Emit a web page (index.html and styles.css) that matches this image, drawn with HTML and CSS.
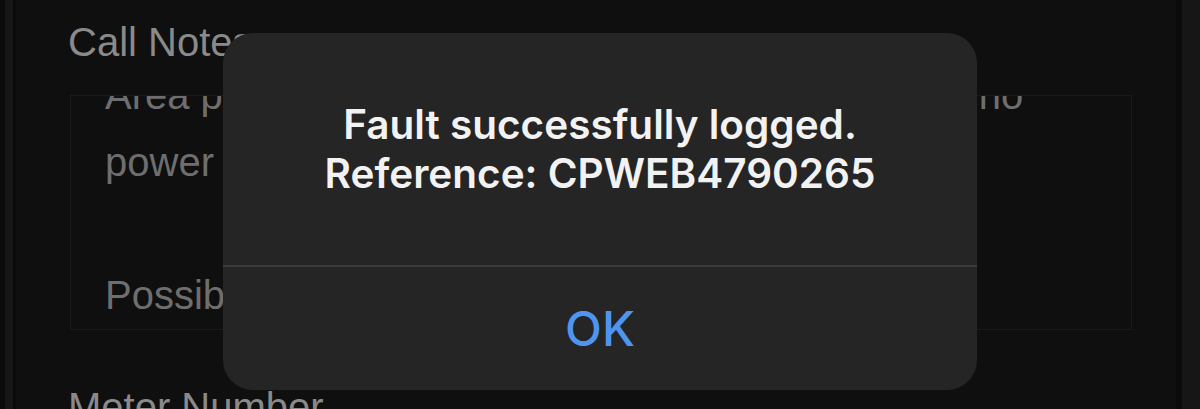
FILE: index.html
```html
<!DOCTYPE html>
<html lang="en">
<head>
<meta charset="utf-8">
<title>Fault logged</title>
<link rel="stylesheet" href="styles.css">
</head>
<body>
<div class="frame">
  <div class="edge-left"></div>
  <main class="form">
    <div class="label">Call Notes</div>
    <div class="notes">
      <div class="notes-text">
        <div class="line">Area power outage in the street, customers have no</div>
        <div class="line">power since this morning.</div>
        <div class="line">&nbsp;</div>
        <div class="line">Possible cable fault.</div>
      </div>
    </div>
    <div class="label label-next">Meter Number</div>
  </main>
  <div class="edge-right"></div>
</div>

<div class="alert" role="alertdialog">
  <div class="alert-body">
    <p class="alert-msg">Fault successfully logged.<br>Reference: CPWEB4790265</p>
  </div>
  <div class="alert-sep"></div>
  <button class="alert-btn" type="button">OK</button>
</div>
</body>
</html>
```
FILE: styles.css
```css
html, body {
  margin: 0;
  padding: 0;
  background: #0f0f0f;
  height: 409px;
  overflow: hidden;
}

.frame {
  display: flex;
  height: 409px;
  font-family: "Liberation Sans", Arial, sans-serif;
}

.edge-left {
  width: 8px;
  flex: none;
  background: #161616;
  border-left: 5px solid #0b0b0b;
  border-right: 3px solid #0a0a0a;
}

.edge-right {
  width: 18px;
  flex: none;
  background: #161616;
  border-left: 6px solid #0b0b0b;
}

.form {
  flex: 1;
  padding: 18px 44px 0 52px;
  overflow: hidden;
}

.label {
  font-size: 40px;
  line-height: 48px;
  color: #8a8a8a;
  white-space: nowrap;
}

.label-next {
  margin-top: 53px;
}

.notes {
  margin: 29px 0 0 2px;
  height: 233px;
  border: 1px solid #1a1a1a;
  overflow: hidden;
  padding: 0 0 0 34px;
}

.notes-text {
  margin-top: -34px;
  font-size: 40px;
  line-height: 66.7px;
  color: #6e6e6e;
  white-space: nowrap;
}

.alert {
  position: absolute;
  left: 223px;
  top: 33px;
  width: 754px;
  height: 357px;
  background: #252525;
  border-radius: 30px;
  display: flex;
  flex-direction: column;
  overflow: hidden;
  font-family: Inter, "Liberation Sans", sans-serif;
}

.alert-body {
  height: 232px;
  display: flex;
  align-items: center;
  justify-content: center;
}

.alert-msg {
  margin: 0;
  text-align: center;
  color: #f2f2f2;
  font-size: 40.5px;
  font-weight: 600;
  line-height: 49px;
}

.alert-sep {
  height: 2px;
  background: #3b3b3b;
}

.alert-btn {
  flex: 1;
  border: 0;
  background: transparent;
  color: #4f95f0;
  font-family: Inter, "Liberation Sans", sans-serif;
  font-size: 48px;
  font-weight: 500;
  padding: 0;
}
```
